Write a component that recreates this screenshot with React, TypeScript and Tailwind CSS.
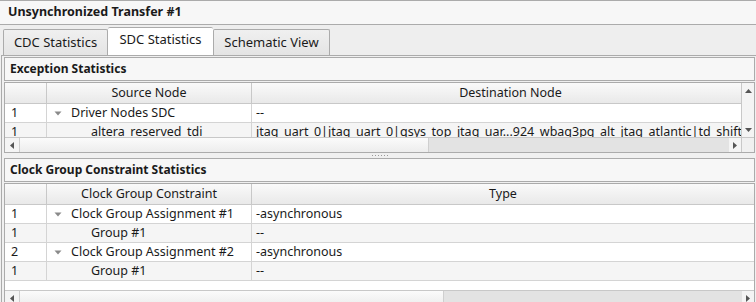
import React from 'react';

const font = { fontFamily: '"Noto Sans", "Open Sans", sans-serif' };

const Caret = () => (
  <svg width="8" height="5" viewBox="0 0 8 5" className="mr-[9px] shrink-0">
    <path d="M0.5 0.5 L7.5 0.5 L4 4.5 Z" fill="#8a8a8a" />
  </svg>
);

const ArrowLeft = () => (
  <svg width="4" height="7" viewBox="0 0 4 7">
    <path d="M4 0 L0 3.5 L4 7 Z" fill="#555" />
  </svg>
);
const ArrowRight = () => (
  <svg width="4" height="7" viewBox="0 0 4 7">
    <path d="M0 0 L4 3.5 L0 7 Z" fill="#555" />
  </svg>
);
const ArrowUp = () => (
  <svg width="7" height="4" viewBox="0 0 7 4">
    <path d="M0 4 L3.5 0 L7 4 Z" fill="#555" />
  </svg>
);
const ArrowDown = () => (
  <svg width="7" height="4" viewBox="0 0 7 4">
    <path d="M0 0 L3.5 4 L7 0 Z" fill="#555" />
  </svg>
);

type Row = { num: string; name: string; value: string; child?: boolean };

const HScroll = ({ thumb }: { thumb: string }) => (
  <div className="flex h-[15px] shrink-0 border-t border-[#c8c8c8] bg-[#f4f4f4]">
    <div className="flex w-[14px] shrink-0 items-center justify-center">
      <ArrowLeft />
    </div>
    <div className={`${thumb} shrink-0 border-x border-[#cfcfcf] bg-gradient-to-b from-[#fbfbfb] to-[#ededed]`} />
    <div className="flex-1 bg-[#e3e3e3]" />
    <div className="flex w-[12px] shrink-0 items-center justify-center bg-[#f4f4f4]">
      <ArrowRight />
    </div>
  </div>
);

const DataRow = ({ row, i, valueClass }: { row: Row; i: number; valueClass?: string }) => (
  <div className={`flex h-[19px] shrink-0 border-b border-[#d4d4d4] ${i % 2 ? 'bg-[#f5f5f5]' : 'bg-white'}`}>
    <div className="flex w-[42px] shrink-0 items-center border-r border-[#d4d4d4] pl-[6px]">{row.num}</div>
    <div className={`flex w-[205px] shrink-0 items-center border-r border-[#d4d4d4] ${row.child ? 'pl-[44px]' : 'pl-[7px]'}`}>
      {!row.child && <Caret />}
      {row.name}
    </div>
    <div className={`flex items-center whitespace-nowrap pl-[4px] ${valueClass ?? 'flex-1'}`}>{row.value}</div>
  </div>
);

const HeaderCell = ({ children, className }: { children?: React.ReactNode; className: string }) => (
  <div className={`flex h-full items-center justify-center border-r border-[#c8c8c8] ${className}`}>{children}</div>
);

const SectionTitle = ({ children }: { children: React.ReactNode }) => (
  <div className="flex h-[24px] shrink-0 items-center border border-[#ababab] bg-[#f7f7f7] pl-[5px] text-[12px] font-bold">
    {children}
  </div>
);

const topRows: Row[] = [
  { num: '1', name: 'Driver Nodes SDC', value: '--' },
  {
    num: '1',
    name: 'altera_reserved_tdi',
    value: 'jtag_uart_0|jtag_uart_0|qsys_top_jtag_uar...924_wbag3pg_alt_jtag_atlantic|td_shift',
    child: true,
  },
];

const bottomRows: Row[] = [
  { num: '1', name: 'Clock Group Assignment #1', value: '-asynchronous' },
  { num: '1', name: 'Group #1', value: '--', child: true },
  { num: '2', name: 'Clock Group Assignment #2', value: '-asynchronous' },
  { num: '1', name: 'Group #1', value: '--', child: true },
];

export default function App() {
  return (
    <div className="flex h-[302px] w-[756px] flex-col overflow-hidden bg-[#f0f0f0] text-[12.5px] text-[#1a1a1a]" style={font}>
      {/* window title */}
      <div className="flex h-[25px] shrink-0 items-center border-y border-[#ababab] bg-[#f7f7f7] pl-[8px] text-[12.5px] font-bold">
        Unsynchronized Transfer #1
      </div>

      {/* tabs */}
      <div className="flex h-[30px] shrink-0 items-end bg-[#eeeeee] pl-[3px]">
        <div className="flex h-[26px] w-[105px] items-center justify-center rounded-t-[2px] border border-b-0 border-[#ababab] bg-gradient-to-b from-[#f0f0f0] to-[#e4e4e4] text-[13px]">
          CDC Statistics
        </div>
        <div className="-mb-px flex h-[29px] w-[105px] items-center justify-center rounded-t-[2px] border-t border-[#ababab] bg-white pb-[4px] text-[13px]">
          SDC Statistics
        </div>
        <div className="flex h-[26px] w-[117px] items-center justify-center rounded-t-[2px] border border-b-0 border-[#ababab] bg-gradient-to-b from-[#f0f0f0] to-[#e4e4e4] text-[13px]">
          Schematic View
        </div>
      </div>

      {/* tab pane */}
      <div className="ml-px flex min-h-0 flex-1 flex-col border-t border-l border-[#ababab] pl-[2px] pt-[1px]">
        {/* Exception Statistics */}
        <div className="flex h-[96px] shrink-0 flex-col pr-[1px]">
          <SectionTitle>Exception Statistics</SectionTitle>
          <div className="mt-[1px] flex min-h-0 flex-1 flex-col border border-[#ababab] bg-white">
            <div className="flex min-h-0 flex-1">
              <div className="flex min-w-0 flex-1 flex-col overflow-hidden">
                <div className="flex h-[21px] shrink-0 border-b border-[#c8c8c8] bg-gradient-to-b from-[#fafafa] to-[#e9e9e9]">
                  <HeaderCell className="w-[42px] shrink-0" />
                  <HeaderCell className="w-[205px] shrink-0">Source Node</HeaderCell>
                  <HeaderCell className="w-[518px] shrink-0">Destination Node</HeaderCell>
                </div>
                {topRows.map((r, i) => (
                  <DataRow key={i} row={r} i={i} valueClass="w-[518px] shrink-0" />
                ))}
              </div>
              <div className="flex w-[13px] shrink-0 flex-col border-l border-[#c8c8c8] bg-[#f4f4f4]">
                <div className="flex h-[15px] items-center justify-center">
                  <ArrowUp />
                </div>
                <div className="flex-1" />
                <div className="flex h-[15px] items-center justify-center">
                  <ArrowDown />
                </div>
              </div>
            </div>
            <div className="flex shrink-0">
              <div className="min-w-0 flex-1">
                <HScroll thumb="w-[410px]" />
              </div>
              <div className="h-[15px] w-[13px] shrink-0 border-t border-l border-[#c8c8c8] bg-[#f0f0f0]" />
            </div>
          </div>
        </div>

        {/* splitter */}
        <div className="flex h-[5px] shrink-0 items-center justify-center gap-[2px]">
          {[0, 1, 2, 3, 4, 5].map((d) => (
            <span key={d} className="h-px w-px bg-[#9a9a9a]" />
          ))}
        </div>

        {/* Clock Group Constraint Statistics */}
        <div className="flex min-h-0 flex-1 flex-col pr-[1px]">
          <SectionTitle>Clock Group Constraint Statistics</SectionTitle>
          <div className="mt-[1px] flex min-h-0 flex-1 flex-col border border-b-0 border-[#ababab] bg-white">
            <div className="flex h-[21px] shrink-0 border-b border-[#c8c8c8] bg-gradient-to-b from-[#fafafa] to-[#e9e9e9]">
              <HeaderCell className="w-[42px] shrink-0" />
              <HeaderCell className="w-[205px] shrink-0">Clock Group Constraint</HeaderCell>
              <HeaderCell className="flex-1 border-r-0">Type</HeaderCell>
            </div>
            {bottomRows.map((r, i) => (
              <DataRow key={i} row={r} i={i} />
            ))}
            <div className="h-[9px] shrink-0 bg-white" />
            <HScroll thumb="w-[425px]" />
          </div>
        </div>
      </div>
    </div>
  );
}
